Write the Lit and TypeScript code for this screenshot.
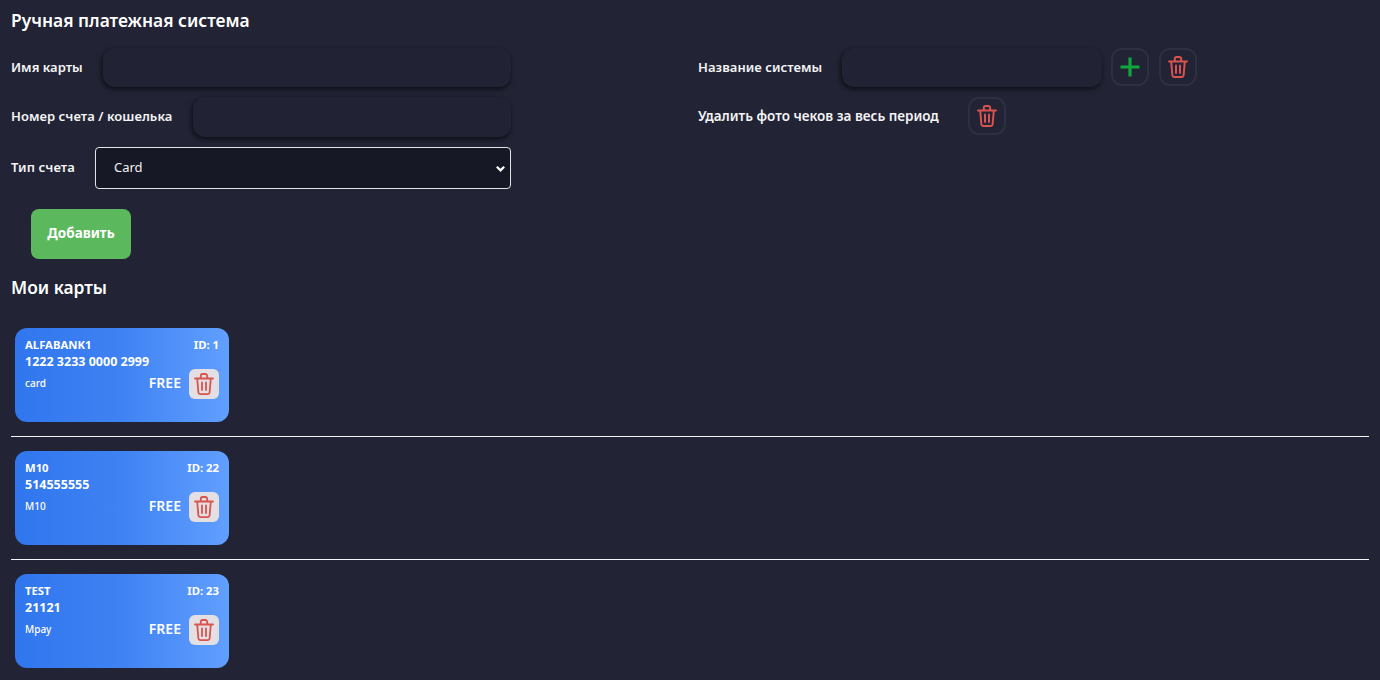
import { LitElement, html, css, svg } from "lit";
import { customElement } from "lit/decorators.js";

const trash = svg`<path d="M3 6.5h18M5.2 6.5l1.2 14a1.8 1.8 0 0 0 1.8 1.6h7.6a1.8 1.8 0 0 0 1.8-1.6l1.2-14M8.8 6.5V3.8A1.8 1.8 0 0 1 10.6 2h2.8a1.8 1.8 0 0 1 1.8 1.8v2.7M10 10.5v7.5M14 10.5v7.5"/>`;

const cards = [
  { name: "ALFABANK1", id: 1, num: "1222 3233 0000 2999", type: "card" },
  { name: "M10", id: 22, num: "514555555", type: "M10" },
  { name: "TEST", id: 23, num: "21121", type: "Mpay" },
];

@customElement("app-root")
export class AppRoot extends LitElement {
  static styles = css`
    :host {
      display: block;
      height: 680px;
      overflow: hidden;
      background: #222334;
      color: #fff;
      font-family: "Noto Sans", "Open Sans", sans-serif;
      padding: 0 11px;
      box-sizing: border-box;
    }
    h2 {
      margin: 0;
      font-size: 17.4px;
      line-height: 22px;
      font-weight: 600;
    }
    .title { padding-top: 9px; height: 38px; box-sizing: border-box; }
    .top { display: grid; grid-template-columns: 687px 1fr; }
    .form { width: 500px; display: flex; flex-direction: column; }
    .row { display: flex; align-items: center; }
    .row.r1 { height: 39px; margin-top: 10px; }
    .row.r2 { height: 40px; margin-top: 10px; }
    .row.r3 { height: 42px; margin-top: 10px; }
    label {
      flex: none;
      font-size: 13px;
      line-height: 16px;
      padding-bottom: 2px;
      font-weight: 600;
      white-space: nowrap;
      color: #f4f4f6;
    }
    .l1 { width: 92px; }
    .l2 { width: 182px; letter-spacing: 0.05px; }
    .l3 { width: 84px; letter-spacing: 0.1px; }
    .l4 { width: 144px; letter-spacing: 0.05px; }
    .l5 { width: 270px; font-size: 13.5px; }
    .input {
      flex: 1;
      height: 100%;
      box-sizing: border-box;
      border-radius: 12px;
      background: #212233;
      box-shadow: -1px 2px 5px rgba(8, 8, 14, 0.8);
    }
    .input.sys { flex: none; width: 260px; }
    .select {
      flex: 1;
      height: 100%;
      box-sizing: border-box;
      border: 1px solid #e4e4e8;
      border-radius: 4px;
      background: #171826;
      display: flex;
      align-items: center;
      justify-content: space-between;
      padding: 0 4px 2px 18px;
      font-size: 13px;
      color: #f0f0f2;
    }
    .select svg { width: 11px; height: 11px; margin-top: 2px; fill: none; stroke: #fff; stroke-width: 2.4; }
    .icon-btn {
      flex: none;
      align-self: flex-start;
      width: 38px;
      height: 38px;
      box-sizing: border-box;
      border: 2px solid #2d2f42;
      border-radius: 11px;
      display: flex;
      align-items: center;
      justify-content: center;
    }
    .icon-btn + .icon-btn { margin-left: 10px; }
    .input + .icon-btn { margin-left: 9px; }
    .icon-btn svg { width: 24px; height: 24px; fill: none; stroke-width: 2; stroke: #d9534f; stroke-linecap: round; stroke-linejoin: round; }
    .icon-btn svg.plus { stroke: #0fa63e; stroke-width: 3.2; stroke-linecap: butt; }
    .add {
      margin: 20px 0 0 20px;
      width: 100px;
      height: 50px;
      padding-bottom: 2px;
      box-sizing: border-box;
      border-radius: 8px;
      background: #5cb85c;
      font-size: 13.5px;
      font-weight: 700;
      display: flex;
      align-items: center;
      justify-content: center;
    }
    .mine { margin-top: 17px; height: 22px; }
    .list { margin-top: 30px; display: flex; flex-direction: column; }
    .card {
      margin-left: 4px;
      width: 214px;
      height: 94px;
      box-sizing: border-box;
      border-radius: 12px;
      background: linear-gradient(90deg, #3076ee 0%, #3f82f3 50%, #619fff 100%);
      padding: 10px 10px 0;
      font-weight: 600;
    }
    .line { display: flex; justify-content: space-between; align-items: center; }
    .name { font-size: 11.3px; line-height: 13px; font-weight: 700; }
    .num { font-size: 12.5px; line-height: 17px; font-weight: 700; margin-top: 2px; }
    .bottom { margin-top: -1px; }
    .kind { font-size: 10px; font-weight: 500; padding-bottom: 2px; }
    .right { display: flex; align-items: center; gap: 8px; }
    .free { font-size: 14px; font-weight: 600; padding-bottom: 4px; }
    .del {
      width: 30px;
      height: 30px;
      border-radius: 6px;
      background: #e3dfe3;
      display: flex;
      align-items: center;
      justify-content: center;
    }
    .del svg { width: 24px; height: 24px; fill: none; stroke: #d9534f; stroke-width: 1.8; stroke-linecap: round; stroke-linejoin: round; }
    hr {
      width: 100%;
      margin: 14px 0;
      border: 0;
      border-top: 1px solid #f4f4f6;
    }
  `;

  render() {
    return html`
      <h2 class="title">Ручная платежная система</h2>
      <div class="top">
        <div class="form">
          <div class="row r1"><label class="l1">Имя карты</label><div class="input"></div></div>
          <div class="row r2"><label class="l2">Номер счета / кошелька</label><div class="input"></div></div>
          <div class="row r3">
            <label class="l3">Тип счета</label>
            <div class="select">Card
              <svg viewBox="0 0 12 12"><path d="M2 4l4 4 4-4"/></svg>
            </div>
          </div>
        </div>
        <div class="form">
          <div class="row r1">
            <label class="l4">Название системы</label>
            <div class="input sys"></div>
            <div class="icon-btn"><svg class="plus" viewBox="0 0 24 24"><path d="M12 2.5v19M2.5 12h19"/></svg></div>
            <div class="icon-btn"><svg viewBox="0 0 24 24">${trash}</svg></div>
          </div>
          <div class="row r2">
            <label class="l5">Удалить фото чеков за весь период</label>
            <div class="icon-btn"><svg viewBox="0 0 24 24">${trash}</svg></div>
          </div>
        </div>
      </div>
      <div class="add">Добавить</div>
      <h2 class="mine">Мои карты</h2>
      <div class="list">
        ${cards.map(
          (c, i) => html`
            ${i ? html`<hr />` : ""}
            <div class="card">
              <div class="line name"><span>${c.name}</span><span>ID: ${c.id}</span></div>
              <div class="num">${c.num}</div>
              <div class="line bottom">
                <span class="kind">${c.type}</span>
                <div class="right">
                  <span class="free">FREE</span>
                  <div class="del"><svg viewBox="0 0 24 24">${trash}</svg></div>
                </div>
              </div>
            </div>
          `
        )}
      </div>
    `;
  }
}
